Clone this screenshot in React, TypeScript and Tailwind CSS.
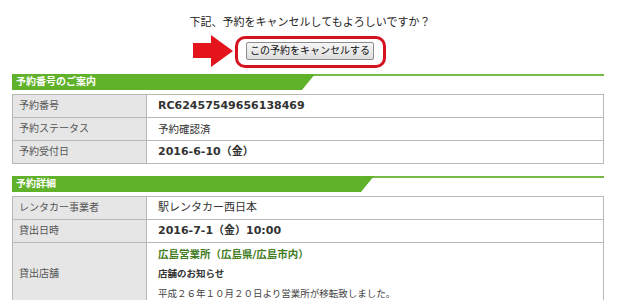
import React from 'react'

const font = { fontFamily: '"DejaVu Sans", "Noto Sans CJK JP", sans-serif' }

function SectionHeader({ title, width }: { title: string; width: string }) {
  return (
    <div className="flex items-start">
      <div
        className={`${width} h-[16px] bg-[#5fb22a] text-white font-bold text-[10px] leading-[16px] pl-[4px] [clip-path:polygon(0_0,100%_0,calc(100%-13px)_100%,0_100%)]`}
      >
        {title}
      </div>
      <div className="flex-1 border-t-2 border-[#78b848] -ml-[2px]" />
    </div>
  )
}

type Row = { label: string; value: React.ReactNode; tall?: boolean }

function InfoTable({ rows }: { rows: Row[] }) {
  return (
    <table className="w-full border-collapse border border-[#b8b8b8] text-[11px] leading-[14px]">
      <tbody>
        {rows.map((r) => (
          <tr key={r.label} className={r.tall ? 'h-[62px]' : 'h-[23px]'}>
            <td className="w-[134px] bg-[#e6e6e6] border border-[#b8b8b8] pl-[6px] py-0 text-[10px] text-[#555] align-middle">
              {r.label}
            </td>
            <td className="border border-[#b8b8b8] pl-[11px] py-0 text-[#333] align-middle">{r.value}</td>
          </tr>
        ))}
      </tbody>
    </table>
  )
}

export default function App() {
  return (
    <div className="w-[620px] h-[300px] overflow-hidden bg-white" style={font}>
      <p className="pt-[16px] text-center text-[11px] leading-[14px] text-[#222]">
        下記、予約をキャンセルしてもよろしいですか？
      </p>

      <div className="flex justify-center mt-[6px]">
        <div className="relative">
          {/* 赤い矢印 */}
          <svg className="absolute top-[-1px] right-[calc(100%+2px)]" width="40" height="33" viewBox="0 0 40 33">
            <polygon points="0,8 18,8 18,0 40,16 18,32 18,23 0,23" fill="#e3141c" />
          </svg>
          <div className="w-[151px] h-[32px] border-[3px] border-[#d5121e] rounded-[10px] flex items-center justify-center pb-[2px]">
            <button className="w-[128px] h-[18px] border border-[#8c8c8c] rounded-[2px] bg-gradient-to-b from-[#f6f6f6] to-[#dedede] text-[10px] leading-[16px] text-[#111]">
              この予約をキャンセルする
            </button>
          </div>
        </div>
      </div>

      <div className="ml-[12px] w-[592px] mt-[6px]">
        <SectionHeader title="予約番号のご案内" width="w-[303px]" />
        <div className="mt-[4px]">
          <InfoTable
            rows={[
              { label: '予約番号', value: <span className="font-bold">RC62457549656138469</span> },
              { label: '予約ステータス', value: <span className="text-[10.5px]">予約確認済</span> },
              { label: '予約受付日', value: <span className="font-bold">2016-6-10（金）</span> },
            ]}
          />
        </div>

        <div className="mt-[12px]">
          <SectionHeader title="予約詳細" width="w-[362px]" />
        </div>
        <div className="mt-[4px]">
          <InfoTable
            rows={[
              { label: 'レンタカー事業者', value: <span>駅レンタカー西日本</span> },
              { label: '貸出日時', value: <span className="font-bold">2016-7-1（金）10:00</span> },
              {
                label: '貸出店舗',
                tall: true,
                value: (
                  <div className="flex flex-col">
                    <span className="font-bold text-[10.5px] leading-[20px] text-[#3f7a1c]">広島営業所（広島県/広島市内）</span>
                    <span className="font-bold text-[9.5px] leading-[20px] text-[#333]">店舗のお知らせ</span>
                    <span className="text-[9.5px] leading-[20px] text-[#444]">平成２６年１０月２０日より営業所が移転致しました。</span>
                  </div>
                ),
              },
            ]}
          />
        </div>
      </div>
    </div>
  )
}
